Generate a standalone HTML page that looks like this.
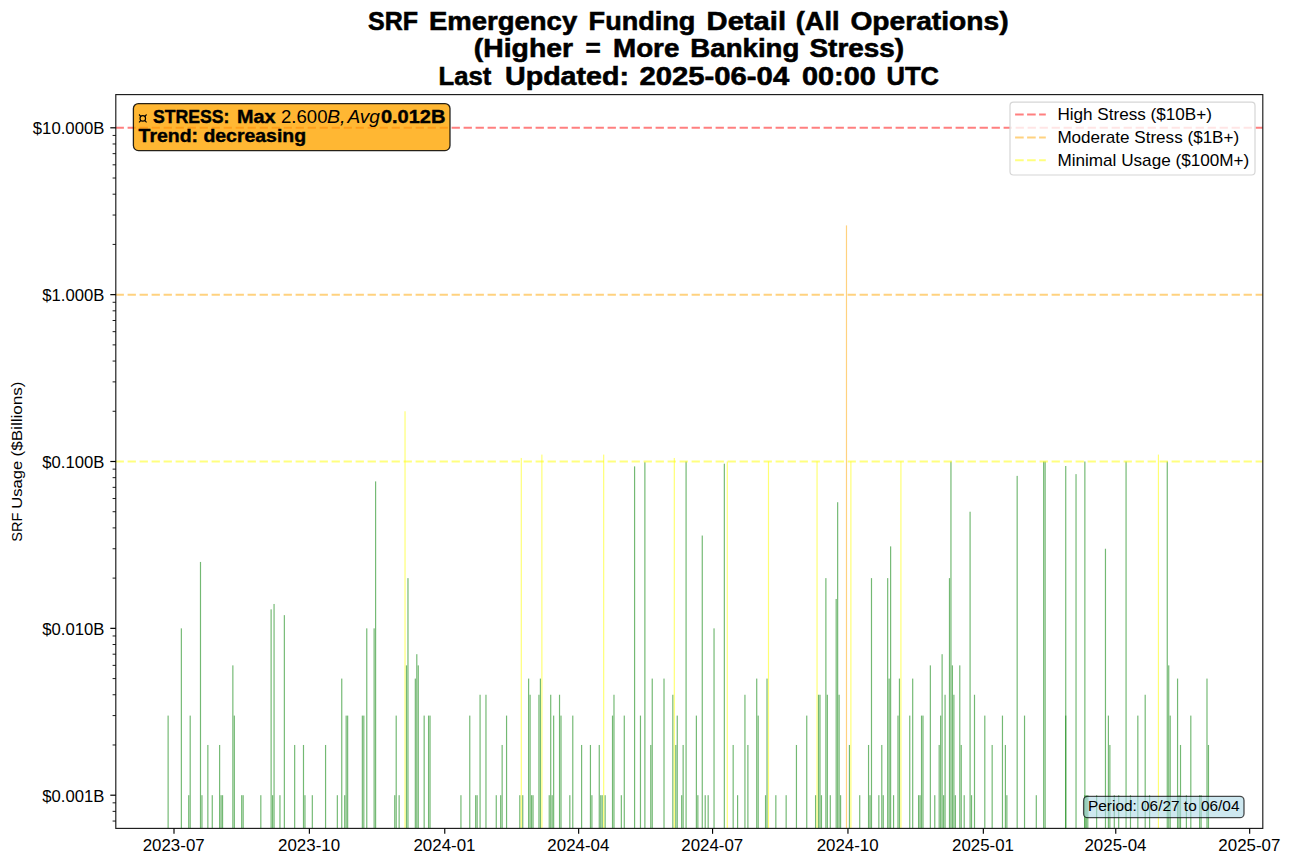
<!DOCTYPE html>
<html><head><meta charset="utf-8"><title>SRF Emergency Funding Detail</title>
<style>html,body{margin:0;padding:0;background:#fff;width:1292px;height:865px;overflow:hidden}
svg text{font-family:"Liberation Sans", sans-serif}</style></head>
<body><svg width="1292" height="865" viewBox="0 0 1292 865" style="display:block" font-family='"Liberation Sans", sans-serif'><g id="bars"><rect x="167.53" y="715.59" width="1.1772" height="112.81" fill="#008000" fill-opacity="0.55"/><rect x="180.77" y="628.35" width="1.1772" height="200.05" fill="#008000" fill-opacity="0.55"/><rect x="188.13" y="795.20" width="1.1772" height="33.20" fill="#008000" fill-opacity="0.55"/><rect x="189.60" y="715.59" width="1.1772" height="112.81" fill="#008000" fill-opacity="0.55"/><rect x="199.90" y="561.95" width="1.1772" height="266.45" fill="#008000" fill-opacity="0.55"/><rect x="201.37" y="795.20" width="1.1772" height="33.20" fill="#008000" fill-opacity="0.55"/><rect x="207.26" y="744.97" width="1.1772" height="83.43" fill="#008000" fill-opacity="0.55"/><rect x="211.67" y="795.20" width="1.1772" height="33.20" fill="#008000" fill-opacity="0.55"/><rect x="219.03" y="744.97" width="1.1772" height="83.43" fill="#008000" fill-opacity="0.55"/><rect x="220.50" y="795.20" width="1.1772" height="33.20" fill="#008000" fill-opacity="0.55"/><rect x="221.97" y="795.20" width="1.1772" height="33.20" fill="#008000" fill-opacity="0.55"/><rect x="232.27" y="665.37" width="1.1772" height="163.03" fill="#008000" fill-opacity="0.55"/><rect x="233.74" y="715.59" width="1.1772" height="112.81" fill="#008000" fill-opacity="0.55"/><rect x="241.10" y="795.20" width="1.1772" height="33.20" fill="#008000" fill-opacity="0.55"/><rect x="242.57" y="795.20" width="1.1772" height="33.20" fill="#008000" fill-opacity="0.55"/><rect x="260.23" y="795.20" width="1.1772" height="33.20" fill="#008000" fill-opacity="0.55"/><rect x="270.53" y="609.34" width="1.1772" height="219.06" fill="#008000" fill-opacity="0.55"/><rect x="272.00" y="795.20" width="1.1772" height="33.20" fill="#008000" fill-opacity="0.55"/><rect x="273.47" y="603.97" width="1.1772" height="224.43" fill="#008000" fill-opacity="0.55"/><rect x="279.36" y="795.20" width="1.1772" height="33.20" fill="#008000" fill-opacity="0.55"/><rect x="283.77" y="615.14" width="1.1772" height="213.26" fill="#008000" fill-opacity="0.55"/><rect x="294.07" y="744.97" width="1.1772" height="83.43" fill="#008000" fill-opacity="0.55"/><rect x="302.90" y="744.97" width="1.1772" height="83.43" fill="#008000" fill-opacity="0.55"/><rect x="304.37" y="795.20" width="1.1772" height="33.20" fill="#008000" fill-opacity="0.55"/><rect x="311.73" y="795.20" width="1.1772" height="33.20" fill="#008000" fill-opacity="0.55"/><rect x="324.98" y="744.97" width="1.1772" height="83.43" fill="#008000" fill-opacity="0.55"/><rect x="336.75" y="795.20" width="1.1772" height="33.20" fill="#008000" fill-opacity="0.55"/><rect x="341.16" y="678.58" width="1.1772" height="149.82" fill="#008000" fill-opacity="0.55"/><rect x="344.11" y="795.20" width="1.1772" height="33.20" fill="#008000" fill-opacity="0.55"/><rect x="345.58" y="715.59" width="1.1772" height="112.81" fill="#008000" fill-opacity="0.55"/><rect x="347.05" y="715.59" width="1.1772" height="112.81" fill="#008000" fill-opacity="0.55"/><rect x="361.76" y="715.59" width="1.1772" height="112.81" fill="#008000" fill-opacity="0.55"/><rect x="363.23" y="715.59" width="1.1772" height="112.81" fill="#008000" fill-opacity="0.55"/><rect x="366.18" y="628.35" width="1.1772" height="200.05" fill="#008000" fill-opacity="0.55"/><rect x="373.54" y="628.35" width="1.1772" height="200.05" fill="#008000" fill-opacity="0.55"/><rect x="375.01" y="481.39" width="1.1772" height="347.01" fill="#008000" fill-opacity="0.55"/><rect x="394.14" y="795.20" width="1.1772" height="33.20" fill="#008000" fill-opacity="0.55"/><rect x="395.61" y="715.59" width="1.1772" height="112.81" fill="#008000" fill-opacity="0.55"/><rect x="398.55" y="795.20" width="1.1772" height="33.20" fill="#008000" fill-opacity="0.55"/><rect x="404.44" y="411.27" width="1.1772" height="417.13" fill="#ffff00" fill-opacity="0.55"/><rect x="405.91" y="665.37" width="1.1772" height="163.03" fill="#008000" fill-opacity="0.55"/><rect x="407.38" y="578.12" width="1.1772" height="250.28" fill="#008000" fill-opacity="0.55"/><rect x="414.74" y="678.58" width="1.1772" height="149.82" fill="#008000" fill-opacity="0.55"/><rect x="416.21" y="654.20" width="1.1772" height="174.20" fill="#008000" fill-opacity="0.55"/><rect x="417.68" y="665.37" width="1.1772" height="163.03" fill="#008000" fill-opacity="0.55"/><rect x="423.57" y="715.59" width="1.1772" height="112.81" fill="#008000" fill-opacity="0.55"/><rect x="427.98" y="715.59" width="1.1772" height="112.81" fill="#008000" fill-opacity="0.55"/><rect x="429.45" y="715.59" width="1.1772" height="112.81" fill="#008000" fill-opacity="0.55"/><rect x="460.35" y="795.20" width="1.1772" height="33.20" fill="#008000" fill-opacity="0.55"/><rect x="469.18" y="715.59" width="1.1772" height="112.81" fill="#008000" fill-opacity="0.55"/><rect x="475.07" y="795.20" width="1.1772" height="33.20" fill="#008000" fill-opacity="0.55"/><rect x="476.54" y="795.20" width="1.1772" height="33.20" fill="#008000" fill-opacity="0.55"/><rect x="479.48" y="694.75" width="1.1772" height="133.65" fill="#008000" fill-opacity="0.55"/><rect x="485.37" y="694.75" width="1.1772" height="133.65" fill="#008000" fill-opacity="0.55"/><rect x="495.67" y="795.20" width="1.1772" height="33.20" fill="#008000" fill-opacity="0.55"/><rect x="500.08" y="795.20" width="1.1772" height="33.20" fill="#008000" fill-opacity="0.55"/><rect x="501.56" y="744.97" width="1.1772" height="83.43" fill="#008000" fill-opacity="0.55"/><rect x="505.97" y="715.59" width="1.1772" height="112.81" fill="#008000" fill-opacity="0.55"/><rect x="519.21" y="795.20" width="1.1772" height="33.20" fill="#008000" fill-opacity="0.55"/><rect x="520.69" y="457.96" width="1.1772" height="370.44" fill="#ffff00" fill-opacity="0.55"/><rect x="522.16" y="795.20" width="1.1772" height="33.20" fill="#008000" fill-opacity="0.55"/><rect x="528.04" y="678.58" width="1.1772" height="149.82" fill="#008000" fill-opacity="0.55"/><rect x="529.51" y="694.75" width="1.1772" height="133.65" fill="#008000" fill-opacity="0.55"/><rect x="530.99" y="795.20" width="1.1772" height="33.20" fill="#008000" fill-opacity="0.55"/><rect x="532.46" y="795.20" width="1.1772" height="33.20" fill="#008000" fill-opacity="0.55"/><rect x="538.34" y="694.75" width="1.1772" height="133.65" fill="#008000" fill-opacity="0.55"/><rect x="539.81" y="678.58" width="1.1772" height="149.82" fill="#008000" fill-opacity="0.55"/><rect x="541.29" y="454.59" width="1.1772" height="373.81" fill="#ffff00" fill-opacity="0.55"/><rect x="548.64" y="795.20" width="1.1772" height="33.20" fill="#008000" fill-opacity="0.55"/><rect x="550.12" y="694.75" width="1.1772" height="133.65" fill="#008000" fill-opacity="0.55"/><rect x="551.59" y="795.20" width="1.1772" height="33.20" fill="#008000" fill-opacity="0.55"/><rect x="553.06" y="715.59" width="1.1772" height="112.81" fill="#008000" fill-opacity="0.55"/><rect x="558.94" y="694.75" width="1.1772" height="133.65" fill="#008000" fill-opacity="0.55"/><rect x="560.42" y="715.59" width="1.1772" height="112.81" fill="#008000" fill-opacity="0.55"/><rect x="569.24" y="795.20" width="1.1772" height="33.20" fill="#008000" fill-opacity="0.55"/><rect x="572.19" y="715.59" width="1.1772" height="112.81" fill="#008000" fill-opacity="0.55"/><rect x="581.02" y="744.97" width="1.1772" height="83.43" fill="#008000" fill-opacity="0.55"/><rect x="589.85" y="744.97" width="1.1772" height="83.43" fill="#008000" fill-opacity="0.55"/><rect x="591.32" y="795.20" width="1.1772" height="33.20" fill="#008000" fill-opacity="0.55"/><rect x="598.67" y="744.97" width="1.1772" height="83.43" fill="#008000" fill-opacity="0.55"/><rect x="600.15" y="795.20" width="1.1772" height="33.20" fill="#008000" fill-opacity="0.55"/><rect x="601.62" y="795.20" width="1.1772" height="33.20" fill="#008000" fill-opacity="0.55"/><rect x="603.09" y="454.59" width="1.1772" height="373.81" fill="#ffff00" fill-opacity="0.55"/><rect x="604.56" y="795.20" width="1.1772" height="33.20" fill="#008000" fill-opacity="0.55"/><rect x="611.92" y="715.59" width="1.1772" height="112.81" fill="#008000" fill-opacity="0.55"/><rect x="613.39" y="694.75" width="1.1772" height="133.65" fill="#008000" fill-opacity="0.55"/><rect x="620.75" y="795.20" width="1.1772" height="33.20" fill="#008000" fill-opacity="0.55"/><rect x="623.69" y="715.59" width="1.1772" height="112.81" fill="#008000" fill-opacity="0.55"/><rect x="633.99" y="466.37" width="1.1772" height="362.03" fill="#008000" fill-opacity="0.55"/><rect x="639.88" y="715.59" width="1.1772" height="112.81" fill="#008000" fill-opacity="0.55"/><rect x="644.29" y="462.23" width="1.1772" height="366.17" fill="#008000" fill-opacity="0.55"/><rect x="650.18" y="744.97" width="1.1772" height="83.43" fill="#008000" fill-opacity="0.55"/><rect x="651.65" y="678.58" width="1.1772" height="149.82" fill="#008000" fill-opacity="0.55"/><rect x="663.42" y="678.58" width="1.1772" height="149.82" fill="#008000" fill-opacity="0.55"/><rect x="672.25" y="694.75" width="1.1772" height="133.65" fill="#008000" fill-opacity="0.55"/><rect x="673.72" y="457.96" width="1.1772" height="370.44" fill="#ffff00" fill-opacity="0.55"/><rect x="675.19" y="744.97" width="1.1772" height="83.43" fill="#008000" fill-opacity="0.55"/><rect x="676.66" y="715.59" width="1.1772" height="112.81" fill="#008000" fill-opacity="0.55"/><rect x="681.08" y="795.20" width="1.1772" height="33.20" fill="#008000" fill-opacity="0.55"/><rect x="682.55" y="744.97" width="1.1772" height="83.43" fill="#008000" fill-opacity="0.55"/><rect x="685.49" y="461.50" width="1.1772" height="366.90" fill="#008000" fill-opacity="0.55"/><rect x="695.79" y="715.59" width="1.1772" height="112.81" fill="#008000" fill-opacity="0.55"/><rect x="697.27" y="795.20" width="1.1772" height="33.20" fill="#008000" fill-opacity="0.55"/><rect x="701.68" y="535.53" width="1.1772" height="292.87" fill="#008000" fill-opacity="0.55"/><rect x="704.62" y="795.20" width="1.1772" height="33.20" fill="#008000" fill-opacity="0.55"/><rect x="707.57" y="795.20" width="1.1772" height="33.20" fill="#008000" fill-opacity="0.55"/><rect x="713.45" y="628.35" width="1.1772" height="200.05" fill="#008000" fill-opacity="0.55"/><rect x="723.75" y="463.71" width="1.1772" height="364.69" fill="#008000" fill-opacity="0.55"/><rect x="726.70" y="461.50" width="1.1772" height="366.90" fill="#ffff00" fill-opacity="0.55"/><rect x="732.58" y="744.97" width="1.1772" height="83.43" fill="#008000" fill-opacity="0.55"/><rect x="737.00" y="795.20" width="1.1772" height="33.20" fill="#008000" fill-opacity="0.55"/><rect x="744.35" y="694.75" width="1.1772" height="133.65" fill="#008000" fill-opacity="0.55"/><rect x="747.30" y="744.97" width="1.1772" height="83.43" fill="#008000" fill-opacity="0.55"/><rect x="756.13" y="678.58" width="1.1772" height="149.82" fill="#008000" fill-opacity="0.55"/><rect x="757.60" y="715.59" width="1.1772" height="112.81" fill="#008000" fill-opacity="0.55"/><rect x="764.95" y="795.20" width="1.1772" height="33.20" fill="#008000" fill-opacity="0.55"/><rect x="766.43" y="678.58" width="1.1772" height="149.82" fill="#008000" fill-opacity="0.55"/><rect x="767.90" y="461.50" width="1.1772" height="366.90" fill="#ffff00" fill-opacity="0.55"/><rect x="775.25" y="795.20" width="1.1772" height="33.20" fill="#008000" fill-opacity="0.55"/><rect x="785.56" y="795.20" width="1.1772" height="33.20" fill="#008000" fill-opacity="0.55"/><rect x="795.86" y="744.97" width="1.1772" height="83.43" fill="#008000" fill-opacity="0.55"/><rect x="806.16" y="715.59" width="1.1772" height="112.81" fill="#008000" fill-opacity="0.55"/><rect x="814.99" y="795.20" width="1.1772" height="33.20" fill="#008000" fill-opacity="0.55"/><rect x="816.46" y="461.50" width="1.1772" height="366.90" fill="#ffff00" fill-opacity="0.55"/><rect x="817.93" y="694.75" width="1.1772" height="133.65" fill="#008000" fill-opacity="0.55"/><rect x="819.40" y="694.75" width="1.1772" height="133.65" fill="#008000" fill-opacity="0.55"/><rect x="820.87" y="795.20" width="1.1772" height="33.20" fill="#008000" fill-opacity="0.55"/><rect x="825.29" y="578.12" width="1.1772" height="250.28" fill="#008000" fill-opacity="0.55"/><rect x="826.76" y="694.75" width="1.1772" height="133.65" fill="#008000" fill-opacity="0.55"/><rect x="829.70" y="795.20" width="1.1772" height="33.20" fill="#008000" fill-opacity="0.55"/><rect x="835.59" y="598.97" width="1.1772" height="229.43" fill="#008000" fill-opacity="0.55"/><rect x="837.06" y="502.23" width="1.1772" height="326.17" fill="#008000" fill-opacity="0.55"/><rect x="838.53" y="694.75" width="1.1772" height="133.65" fill="#008000" fill-opacity="0.55"/><rect x="840.00" y="795.20" width="1.1772" height="33.20" fill="#008000" fill-opacity="0.55"/><rect x="845.89" y="225.41" width="1.1772" height="602.99" fill="#ffa500" fill-opacity="0.5"/><rect x="848.83" y="744.97" width="1.1772" height="83.43" fill="#008000" fill-opacity="0.55"/><rect x="850.30" y="461.50" width="1.1772" height="366.90" fill="#ffff00" fill-opacity="0.55"/><rect x="859.13" y="795.20" width="1.1772" height="33.20" fill="#008000" fill-opacity="0.55"/><rect x="867.96" y="744.97" width="1.1772" height="83.43" fill="#008000" fill-opacity="0.55"/><rect x="869.43" y="795.20" width="1.1772" height="33.20" fill="#008000" fill-opacity="0.55"/><rect x="870.90" y="578.12" width="1.1772" height="250.28" fill="#008000" fill-opacity="0.55"/><rect x="878.26" y="795.20" width="1.1772" height="33.20" fill="#008000" fill-opacity="0.55"/><rect x="881.20" y="744.97" width="1.1772" height="83.43" fill="#008000" fill-opacity="0.55"/><rect x="882.67" y="795.20" width="1.1772" height="33.20" fill="#008000" fill-opacity="0.55"/><rect x="887.09" y="578.12" width="1.1772" height="250.28" fill="#008000" fill-opacity="0.55"/><rect x="888.56" y="678.58" width="1.1772" height="149.82" fill="#008000" fill-opacity="0.55"/><rect x="890.03" y="546.37" width="1.1772" height="282.03" fill="#008000" fill-opacity="0.55"/><rect x="892.97" y="795.20" width="1.1772" height="33.20" fill="#008000" fill-opacity="0.55"/><rect x="897.39" y="715.59" width="1.1772" height="112.81" fill="#008000" fill-opacity="0.55"/><rect x="898.86" y="678.58" width="1.1772" height="149.82" fill="#008000" fill-opacity="0.55"/><rect x="900.33" y="461.50" width="1.1772" height="366.90" fill="#ffff00" fill-opacity="0.55"/><rect x="909.16" y="715.59" width="1.1772" height="112.81" fill="#008000" fill-opacity="0.55"/><rect x="912.10" y="678.58" width="1.1772" height="149.82" fill="#008000" fill-opacity="0.55"/><rect x="917.99" y="795.20" width="1.1772" height="33.20" fill="#008000" fill-opacity="0.55"/><rect x="919.46" y="795.20" width="1.1772" height="33.20" fill="#008000" fill-opacity="0.55"/><rect x="920.93" y="715.59" width="1.1772" height="112.81" fill="#008000" fill-opacity="0.55"/><rect x="922.40" y="715.59" width="1.1772" height="112.81" fill="#008000" fill-opacity="0.55"/><rect x="929.76" y="665.37" width="1.1772" height="163.03" fill="#008000" fill-opacity="0.55"/><rect x="934.18" y="795.20" width="1.1772" height="33.20" fill="#008000" fill-opacity="0.55"/><rect x="938.59" y="744.97" width="1.1772" height="83.43" fill="#008000" fill-opacity="0.55"/><rect x="940.06" y="715.59" width="1.1772" height="112.81" fill="#008000" fill-opacity="0.55"/><rect x="941.53" y="654.20" width="1.1772" height="174.20" fill="#008000" fill-opacity="0.55"/><rect x="943.01" y="795.20" width="1.1772" height="33.20" fill="#008000" fill-opacity="0.55"/><rect x="944.48" y="694.75" width="1.1772" height="133.65" fill="#008000" fill-opacity="0.55"/><rect x="948.89" y="578.12" width="1.1772" height="250.28" fill="#008000" fill-opacity="0.55"/><rect x="950.36" y="461.50" width="1.1772" height="366.90" fill="#008000" fill-opacity="0.55"/><rect x="951.83" y="665.37" width="1.1772" height="163.03" fill="#008000" fill-opacity="0.55"/><rect x="953.31" y="694.75" width="1.1772" height="133.65" fill="#008000" fill-opacity="0.55"/><rect x="954.78" y="795.20" width="1.1772" height="33.20" fill="#008000" fill-opacity="0.55"/><rect x="959.19" y="665.37" width="1.1772" height="163.03" fill="#008000" fill-opacity="0.55"/><rect x="960.66" y="744.97" width="1.1772" height="83.43" fill="#008000" fill-opacity="0.55"/><rect x="963.61" y="795.20" width="1.1772" height="33.20" fill="#008000" fill-opacity="0.55"/><rect x="969.49" y="511.73" width="1.1772" height="316.67" fill="#008000" fill-opacity="0.55"/><rect x="970.96" y="795.20" width="1.1772" height="33.20" fill="#008000" fill-opacity="0.55"/><rect x="973.91" y="694.75" width="1.1772" height="133.65" fill="#008000" fill-opacity="0.55"/><rect x="984.21" y="715.59" width="1.1772" height="112.81" fill="#008000" fill-opacity="0.55"/><rect x="991.57" y="744.97" width="1.1772" height="83.43" fill="#008000" fill-opacity="0.55"/><rect x="1001.87" y="715.59" width="1.1772" height="112.81" fill="#008000" fill-opacity="0.55"/><rect x="1004.81" y="744.97" width="1.1772" height="83.43" fill="#008000" fill-opacity="0.55"/><rect x="1006.28" y="795.20" width="1.1772" height="33.20" fill="#008000" fill-opacity="0.55"/><rect x="1016.58" y="475.88" width="1.1772" height="352.52" fill="#008000" fill-opacity="0.55"/><rect x="1023.94" y="715.59" width="1.1772" height="112.81" fill="#008000" fill-opacity="0.55"/><rect x="1035.71" y="795.20" width="1.1772" height="33.20" fill="#008000" fill-opacity="0.55"/><rect x="1043.07" y="461.50" width="1.1772" height="366.90" fill="#008000" fill-opacity="0.55"/><rect x="1044.54" y="461.50" width="1.1772" height="366.90" fill="#008000" fill-opacity="0.55"/><rect x="1065.14" y="715.59" width="1.1772" height="112.81" fill="#008000" fill-opacity="0.55"/><rect x="1065.14" y="465.98" width="1.1772" height="362.42" fill="#008000" fill-opacity="0.55"/><rect x="1075.44" y="474.13" width="1.1772" height="354.27" fill="#008000" fill-opacity="0.55"/><rect x="1084.27" y="461.50" width="1.1772" height="366.90" fill="#008000" fill-opacity="0.55"/><rect x="1084.27" y="795.20" width="1.1772" height="33.20" fill="#008000" fill-opacity="0.55"/><rect x="1085.74" y="795.20" width="1.1772" height="33.20" fill="#008000" fill-opacity="0.55"/><rect x="1087.21" y="795.20" width="1.1772" height="33.20" fill="#008000" fill-opacity="0.55"/><rect x="1096.04" y="795.20" width="1.1772" height="33.20" fill="#008000" fill-opacity="0.55"/><rect x="1104.87" y="548.74" width="1.1772" height="279.66" fill="#008000" fill-opacity="0.55"/><rect x="1107.81" y="715.59" width="1.1772" height="112.81" fill="#008000" fill-opacity="0.55"/><rect x="1109.29" y="744.97" width="1.1772" height="83.43" fill="#008000" fill-opacity="0.55"/><rect x="1113.70" y="795.20" width="1.1772" height="33.20" fill="#008000" fill-opacity="0.55"/><rect x="1118.11" y="795.20" width="1.1772" height="33.20" fill="#008000" fill-opacity="0.55"/><rect x="1125.47" y="461.50" width="1.1772" height="366.90" fill="#008000" fill-opacity="0.55"/><rect x="1129.89" y="795.20" width="1.1772" height="33.20" fill="#008000" fill-opacity="0.55"/><rect x="1137.24" y="715.59" width="1.1772" height="112.81" fill="#008000" fill-opacity="0.55"/><rect x="1144.60" y="694.75" width="1.1772" height="133.65" fill="#008000" fill-opacity="0.55"/><rect x="1149.02" y="795.20" width="1.1772" height="33.20" fill="#008000" fill-opacity="0.55"/><rect x="1157.84" y="454.59" width="1.1772" height="373.81" fill="#ffff00" fill-opacity="0.55"/><rect x="1166.67" y="461.50" width="1.1772" height="366.90" fill="#008000" fill-opacity="0.55"/><rect x="1168.15" y="665.37" width="1.1772" height="163.03" fill="#008000" fill-opacity="0.55"/><rect x="1169.62" y="715.59" width="1.1772" height="112.81" fill="#008000" fill-opacity="0.55"/><rect x="1176.97" y="678.58" width="1.1772" height="149.82" fill="#008000" fill-opacity="0.55"/><rect x="1178.45" y="795.20" width="1.1772" height="33.20" fill="#008000" fill-opacity="0.55"/><rect x="1179.92" y="744.97" width="1.1772" height="83.43" fill="#008000" fill-opacity="0.55"/><rect x="1185.80" y="795.20" width="1.1772" height="33.20" fill="#008000" fill-opacity="0.55"/><rect x="1190.22" y="715.59" width="1.1772" height="112.81" fill="#008000" fill-opacity="0.55"/><rect x="1199.05" y="795.20" width="1.1772" height="33.20" fill="#008000" fill-opacity="0.55"/><rect x="1200.52" y="795.20" width="1.1772" height="33.20" fill="#008000" fill-opacity="0.55"/><rect x="1206.40" y="678.58" width="1.1772" height="149.82" fill="#008000" fill-opacity="0.55"/><rect x="1207.88" y="744.97" width="1.1772" height="83.43" fill="#008000" fill-opacity="0.55"/></g><line x1="115.60" y1="127.80" x2="1262.80" y2="127.80" stroke="#ff0000" stroke-opacity="0.5" stroke-width="2" stroke-dasharray="8.3 3.7"/><line x1="115.60" y1="294.65" x2="1262.80" y2="294.65" stroke="#ffa500" stroke-opacity="0.5" stroke-width="2" stroke-dasharray="8.3 3.7"/><line x1="115.60" y1="461.50" x2="1262.80" y2="461.50" stroke="#ffff00" stroke-opacity="0.5" stroke-width="2" stroke-dasharray="8.3 3.7"/><rect x="115.80" y="94.60" width="1147.00" height="733.80" fill="none" stroke="#1a1a1a" stroke-width="1.15"/><line x1="110.30" y1="127.80" x2="115.80" y2="127.80" stroke="#000" stroke-width="1.2"/><text x="104.40" y="134.20" font-size="17.0" text-anchor="end" font-weight="normal" font-style="normal" fill="#000" textLength="71.60" lengthAdjust="spacingAndGlyphs">$10.000B</text><line x1="110.30" y1="294.65" x2="115.80" y2="294.65" stroke="#000" stroke-width="1.2"/><text x="104.40" y="301.05" font-size="17.0" text-anchor="end" font-weight="normal" font-style="normal" fill="#000" textLength="62.10" lengthAdjust="spacingAndGlyphs">$1.000B</text><line x1="110.30" y1="461.50" x2="115.80" y2="461.50" stroke="#000" stroke-width="1.2"/><text x="104.40" y="467.90" font-size="17.0" text-anchor="end" font-weight="normal" font-style="normal" fill="#000" textLength="62.10" lengthAdjust="spacingAndGlyphs">$0.100B</text><line x1="110.30" y1="628.35" x2="115.80" y2="628.35" stroke="#000" stroke-width="1.2"/><text x="104.40" y="634.75" font-size="17.0" text-anchor="end" font-weight="normal" font-style="normal" fill="#000" textLength="62.10" lengthAdjust="spacingAndGlyphs">$0.010B</text><line x1="110.30" y1="795.20" x2="115.80" y2="795.20" stroke="#000" stroke-width="1.2"/><text x="104.40" y="801.60" font-size="17.0" text-anchor="end" font-weight="normal" font-style="normal" fill="#000" textLength="62.10" lengthAdjust="spacingAndGlyphs">$0.001B</text><line x1="112.60" y1="821.05" x2="115.80" y2="821.05" stroke="#000" stroke-width="0.9"/><line x1="112.60" y1="811.37" x2="115.80" y2="811.37" stroke="#000" stroke-width="0.9"/><line x1="112.60" y1="802.83" x2="115.80" y2="802.83" stroke="#000" stroke-width="0.9"/><line x1="112.60" y1="744.97" x2="115.80" y2="744.97" stroke="#000" stroke-width="0.9"/><line x1="112.60" y1="715.59" x2="115.80" y2="715.59" stroke="#000" stroke-width="0.9"/><line x1="112.60" y1="694.75" x2="115.80" y2="694.75" stroke="#000" stroke-width="0.9"/><line x1="112.60" y1="678.58" x2="115.80" y2="678.58" stroke="#000" stroke-width="0.9"/><line x1="112.60" y1="665.37" x2="115.80" y2="665.37" stroke="#000" stroke-width="0.9"/><line x1="112.60" y1="654.20" x2="115.80" y2="654.20" stroke="#000" stroke-width="0.9"/><line x1="112.60" y1="644.52" x2="115.80" y2="644.52" stroke="#000" stroke-width="0.9"/><line x1="112.60" y1="635.98" x2="115.80" y2="635.98" stroke="#000" stroke-width="0.9"/><line x1="112.60" y1="578.12" x2="115.80" y2="578.12" stroke="#000" stroke-width="0.9"/><line x1="112.60" y1="548.74" x2="115.80" y2="548.74" stroke="#000" stroke-width="0.9"/><line x1="112.60" y1="527.90" x2="115.80" y2="527.90" stroke="#000" stroke-width="0.9"/><line x1="112.60" y1="511.73" x2="115.80" y2="511.73" stroke="#000" stroke-width="0.9"/><line x1="112.60" y1="498.52" x2="115.80" y2="498.52" stroke="#000" stroke-width="0.9"/><line x1="112.60" y1="487.35" x2="115.80" y2="487.35" stroke="#000" stroke-width="0.9"/><line x1="112.60" y1="477.67" x2="115.80" y2="477.67" stroke="#000" stroke-width="0.9"/><line x1="112.60" y1="469.13" x2="115.80" y2="469.13" stroke="#000" stroke-width="0.9"/><line x1="112.60" y1="411.27" x2="115.80" y2="411.27" stroke="#000" stroke-width="0.9"/><line x1="112.60" y1="381.89" x2="115.80" y2="381.89" stroke="#000" stroke-width="0.9"/><line x1="112.60" y1="361.05" x2="115.80" y2="361.05" stroke="#000" stroke-width="0.9"/><line x1="112.60" y1="344.88" x2="115.80" y2="344.88" stroke="#000" stroke-width="0.9"/><line x1="112.60" y1="331.67" x2="115.80" y2="331.67" stroke="#000" stroke-width="0.9"/><line x1="112.60" y1="320.50" x2="115.80" y2="320.50" stroke="#000" stroke-width="0.9"/><line x1="112.60" y1="310.82" x2="115.80" y2="310.82" stroke="#000" stroke-width="0.9"/><line x1="112.60" y1="302.28" x2="115.80" y2="302.28" stroke="#000" stroke-width="0.9"/><line x1="112.60" y1="244.42" x2="115.80" y2="244.42" stroke="#000" stroke-width="0.9"/><line x1="112.60" y1="215.04" x2="115.80" y2="215.04" stroke="#000" stroke-width="0.9"/><line x1="112.60" y1="194.20" x2="115.80" y2="194.20" stroke="#000" stroke-width="0.9"/><line x1="112.60" y1="178.03" x2="115.80" y2="178.03" stroke="#000" stroke-width="0.9"/><line x1="112.60" y1="164.82" x2="115.80" y2="164.82" stroke="#000" stroke-width="0.9"/><line x1="112.60" y1="153.65" x2="115.80" y2="153.65" stroke="#000" stroke-width="0.9"/><line x1="112.60" y1="143.97" x2="115.80" y2="143.97" stroke="#000" stroke-width="0.9"/><line x1="112.60" y1="135.43" x2="115.80" y2="135.43" stroke="#000" stroke-width="0.9"/><line x1="174.00" y1="828.40" x2="174.00" y2="833.80" stroke="#000" stroke-width="1.15"/><text x="173.70" y="851.00" font-size="16.8" text-anchor="middle" font-weight="normal" font-style="normal" fill="#000" textLength="62.00" lengthAdjust="spacingAndGlyphs">2023-07</text><line x1="309.38" y1="828.40" x2="309.38" y2="833.80" stroke="#000" stroke-width="1.15"/><text x="309.08" y="851.00" font-size="16.8" text-anchor="middle" font-weight="normal" font-style="normal" fill="#000" textLength="62.00" lengthAdjust="spacingAndGlyphs">2023-10</text><line x1="444.76" y1="828.40" x2="444.76" y2="833.80" stroke="#000" stroke-width="1.15"/><text x="444.46" y="851.00" font-size="16.8" text-anchor="middle" font-weight="normal" font-style="normal" fill="#000" textLength="62.00" lengthAdjust="spacingAndGlyphs">2024-01</text><line x1="578.66" y1="828.40" x2="578.66" y2="833.80" stroke="#000" stroke-width="1.15"/><text x="578.36" y="851.00" font-size="16.8" text-anchor="middle" font-weight="normal" font-style="normal" fill="#000" textLength="62.00" lengthAdjust="spacingAndGlyphs">2024-04</text><line x1="712.57" y1="828.40" x2="712.57" y2="833.80" stroke="#000" stroke-width="1.15"/><text x="712.27" y="851.00" font-size="16.8" text-anchor="middle" font-weight="normal" font-style="normal" fill="#000" textLength="62.00" lengthAdjust="spacingAndGlyphs">2024-07</text><line x1="847.95" y1="828.40" x2="847.95" y2="833.80" stroke="#000" stroke-width="1.15"/><text x="847.65" y="851.00" font-size="16.8" text-anchor="middle" font-weight="normal" font-style="normal" fill="#000" textLength="62.00" lengthAdjust="spacingAndGlyphs">2024-10</text><line x1="983.33" y1="828.40" x2="983.33" y2="833.80" stroke="#000" stroke-width="1.15"/><text x="983.03" y="851.00" font-size="16.8" text-anchor="middle" font-weight="normal" font-style="normal" fill="#000" textLength="62.00" lengthAdjust="spacingAndGlyphs">2025-01</text><line x1="1115.76" y1="828.40" x2="1115.76" y2="833.80" stroke="#000" stroke-width="1.15"/><text x="1115.46" y="851.00" font-size="16.8" text-anchor="middle" font-weight="normal" font-style="normal" fill="#000" textLength="62.00" lengthAdjust="spacingAndGlyphs">2025-04</text><line x1="1249.67" y1="828.40" x2="1249.67" y2="833.80" stroke="#000" stroke-width="1.15"/><text x="1249.37" y="851.00" font-size="16.8" text-anchor="middle" font-weight="normal" font-style="normal" fill="#000" textLength="62.00" lengthAdjust="spacingAndGlyphs">2025-07</text><text transform="translate(22.3,541.71) rotate(-90)" x="0" y="0" font-size="15.2" textLength="29.21" lengthAdjust="spacingAndGlyphs">SRF</text><text transform="translate(22.3,508.72) rotate(-90)" x="0" y="0" font-size="15.2" textLength="47.84" lengthAdjust="spacingAndGlyphs">Usage</text><text transform="translate(22.3,456.50) rotate(-90)" x="0" y="0" font-size="15.2" textLength="75.01" lengthAdjust="spacingAndGlyphs">($Billions)</text><text x="368.00" y="29.60" font-size="25.8" text-anchor="start" font-weight="bold" font-style="normal" fill="#000" textLength="50.00" lengthAdjust="spacingAndGlyphs" stroke="#000" stroke-width="0.57">SRF</text><text x="429.01" y="29.60" font-size="25.8" text-anchor="start" font-weight="bold" font-style="normal" fill="#000" textLength="148.20" lengthAdjust="spacingAndGlyphs" stroke="#000" stroke-width="0.57">Emergency</text><text x="588.60" y="29.60" font-size="25.8" text-anchor="start" font-weight="bold" font-style="normal" fill="#000" textLength="106.80" lengthAdjust="spacingAndGlyphs" stroke="#000" stroke-width="0.57">Funding</text><text x="706.60" y="29.60" font-size="25.8" text-anchor="start" font-weight="bold" font-style="normal" fill="#000" textLength="79.40" lengthAdjust="spacingAndGlyphs" stroke="#000" stroke-width="0.57">Detail</text><text x="795.79" y="29.60" font-size="25.8" text-anchor="start" font-weight="bold" font-style="normal" fill="#000" textLength="43.81" lengthAdjust="spacingAndGlyphs" stroke="#000" stroke-width="0.57">(All</text><text x="850.40" y="29.60" font-size="25.8" text-anchor="start" font-weight="bold" font-style="normal" fill="#000" textLength="158.20" lengthAdjust="spacingAndGlyphs" stroke="#000" stroke-width="0.57">Operations)</text><text x="473.80" y="57.35" font-size="25.8" text-anchor="start" font-weight="bold" font-style="normal" fill="#000" textLength="99.22" lengthAdjust="spacingAndGlyphs" stroke="#000" stroke-width="0.57">(Higher</text><text x="585.57" y="57.35" font-size="25.8" text-anchor="start" font-weight="bold" font-style="normal" fill="#000" textLength="15.27" lengthAdjust="spacingAndGlyphs" stroke="#000" stroke-width="0.57">=</text><text x="612.99" y="57.35" font-size="25.8" text-anchor="start" font-weight="bold" font-style="normal" fill="#000" textLength="66.42" lengthAdjust="spacingAndGlyphs" stroke="#000" stroke-width="0.57">More</text><text x="690.35" y="57.35" font-size="25.8" text-anchor="start" font-weight="bold" font-style="normal" fill="#000" textLength="108.97" lengthAdjust="spacingAndGlyphs" stroke="#000" stroke-width="0.57">Banking</text><text x="809.50" y="57.35" font-size="25.8" text-anchor="start" font-weight="bold" font-style="normal" fill="#000" textLength="94.64" lengthAdjust="spacingAndGlyphs" stroke="#000" stroke-width="0.57">Stress)</text><text x="438.61" y="85.10" font-size="25.8" text-anchor="start" font-weight="bold" font-style="normal" fill="#000" textLength="52.62" lengthAdjust="spacingAndGlyphs" stroke="#000" stroke-width="0.57">Last</text><text x="504.99" y="85.10" font-size="25.8" text-anchor="start" font-weight="bold" font-style="normal" fill="#000" textLength="124.02" lengthAdjust="spacingAndGlyphs" stroke="#000" stroke-width="0.57">Updated:</text><text x="639.40" y="85.10" font-size="25.8" text-anchor="start" font-weight="bold" font-style="normal" fill="#000" textLength="149.81" lengthAdjust="spacingAndGlyphs" stroke="#000" stroke-width="0.57">2025-06-04</text><text x="802.00" y="85.10" font-size="25.8" text-anchor="start" font-weight="bold" font-style="normal" fill="#000" textLength="73.82" lengthAdjust="spacingAndGlyphs" stroke="#000" stroke-width="0.57">00:00</text><text x="886.61" y="85.10" font-size="25.8" text-anchor="start" font-weight="bold" font-style="normal" fill="#000" textLength="52.39" lengthAdjust="spacingAndGlyphs" stroke="#000" stroke-width="0.57">UTC</text><rect x="133.4" y="103.55" width="316.60" height="47.05" rx="5" ry="5" fill="#ffa500" fill-opacity="0.8" stroke="#000" stroke-opacity="0.85" stroke-width="1.3"/><g stroke="#000" fill="none"><circle cx="142.8" cy="118.4" r="2.75" stroke-width="1.15"/><path d="M139.0 114.5L141.0 116.6M146.6 114.5L144.6 116.6M139.0 122.4L141.0 120.3M146.6 122.4L144.6 120.3" stroke-width="1.1"/></g><text x="152.90" y="122.90" font-size="18.5" text-anchor="start" font-weight="bold" font-style="normal" fill="#000" textLength="76.50" lengthAdjust="spacingAndGlyphs" stroke="#000" stroke-width="0.41">STRESS:</text><text x="237.00" y="122.90" font-size="18.5" text-anchor="start" font-weight="bold" font-style="normal" fill="#000" textLength="38.50" lengthAdjust="spacingAndGlyphs" stroke="#000" stroke-width="0.41">Max</text><text x="281.00" y="122.90" font-size="18.5" text-anchor="start" font-weight="normal" font-style="normal" fill="#000" textLength="46.50" lengthAdjust="spacingAndGlyphs">2.600</text><text x="327.00" y="122.90" font-size="18.5" text-anchor="start" font-weight="normal" font-style="italic" fill="#000" textLength="18.50" lengthAdjust="spacingAndGlyphs">B,</text><text x="347.40" y="122.90" font-size="18.5" text-anchor="start" font-weight="normal" font-style="italic" fill="#000" textLength="32.50" lengthAdjust="spacingAndGlyphs">Avg</text><text x="380.90" y="122.90" font-size="18.5" text-anchor="start" font-weight="bold" font-style="normal" fill="#000" textLength="64.50" lengthAdjust="spacingAndGlyphs" stroke="#000" stroke-width="0.41">0.012B</text><text x="138.60" y="141.80" font-size="18.5" text-anchor="start" font-weight="bold" font-style="normal" fill="#000" textLength="167.50" lengthAdjust="spacingAndGlyphs" stroke="#000" stroke-width="0.41">Trend: decreasing</text><rect x="1010.0" y="102.2" width="245.0" height="72.8" rx="3.5" ry="3.5" fill="#ffffff" fill-opacity="0.8" stroke="#d6d6d6" stroke-width="1.2"/><line x1="1015.1" y1="114.60" x2="1045.8" y2="114.60" stroke="#ff0000" stroke-opacity="0.5" stroke-width="2" stroke-dasharray="8.6 3.4"/><text x="1057.40" y="120.20" font-size="17.0" text-anchor="start" font-weight="normal" font-style="normal" fill="#000" textLength="154.60" lengthAdjust="spacingAndGlyphs">High Stress ($10B+)</text><line x1="1015.1" y1="137.45" x2="1045.8" y2="137.45" stroke="#ffa500" stroke-opacity="0.5" stroke-width="2" stroke-dasharray="8.6 3.4"/><text x="1057.40" y="143.05" font-size="17.0" text-anchor="start" font-weight="normal" font-style="normal" fill="#000" textLength="181.80" lengthAdjust="spacingAndGlyphs">Moderate Stress ($1B+)</text><line x1="1015.1" y1="160.30" x2="1045.8" y2="160.30" stroke="#ffff00" stroke-opacity="0.5" stroke-width="2" stroke-dasharray="8.6 3.4"/><text x="1057.40" y="165.90" font-size="17.0" text-anchor="start" font-weight="normal" font-style="normal" fill="#000" textLength="191.90" lengthAdjust="spacingAndGlyphs">Minimal Usage ($100M+)</text><rect x="1083.6" y="796.4" width="160.4" height="21.3" rx="4" ry="4" fill="#add8e6" fill-opacity="0.6" stroke="#000" stroke-opacity="0.7" stroke-width="1.3"/><text x="1088.00" y="810.80" font-size="13.9" text-anchor="start" font-weight="normal" font-style="normal" fill="#000" textLength="151.50" lengthAdjust="spacingAndGlyphs">Period: 06/27 to 06/04</text></svg></body></html>
